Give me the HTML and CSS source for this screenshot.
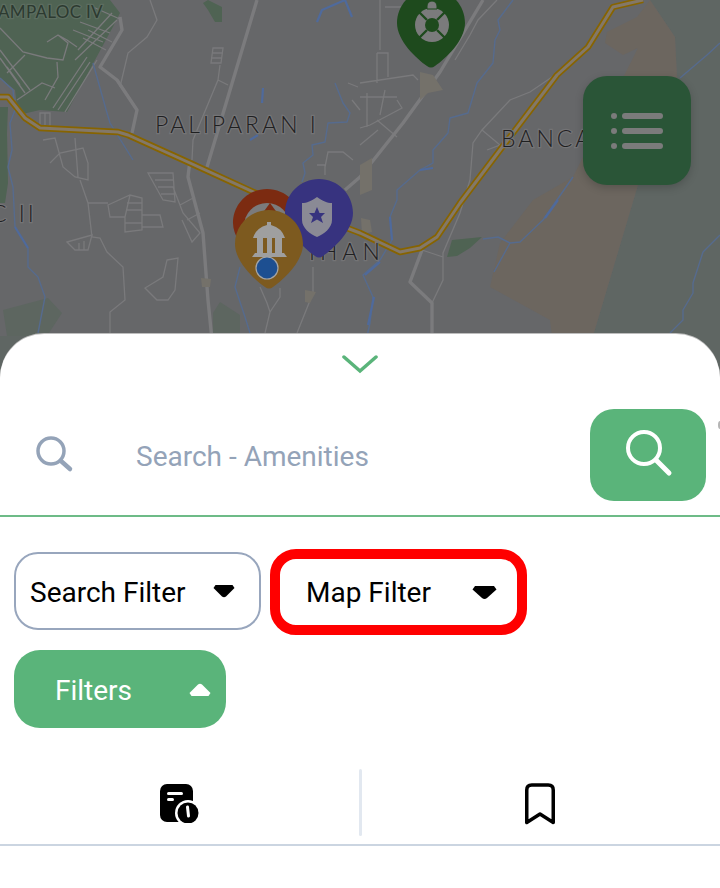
FILE: index.html
```html
<!DOCTYPE html>
<html lang="en">
<head>
<meta charset="utf-8">
<title>Map Filter</title>
<link rel="stylesheet" href="styles.css">
</head>
<body>
<div class="page">
  <div class="map">
    <svg class="map-art" width="720" height="400" viewBox="0 0 720 400">
      <defs>
        <path id="pin" d="M34 0C52.8 0 68 15.2 68 34C68 52 48 70 38 77Q34 80 30 77C20 70 0 52 0 34C0 15.2 15.2 0 34 0Z"/>
      </defs>
      <rect width="720" height="400" fill="#666769"/>
      <g class="soft">
        <path d="M650 0H720V400H0V336H593L638 185L677 77L675 37Z" fill="#5f6663"/>
        <path d="M650 0L675 37L677 77L638 185L593 336H552L550 320L490 287L500 243L533 200L573 177L583 157L638 48L623 55L605 43L607 32L637 17Z" fill="#6c665f"/>
        <path d="M0 0H110L120 13L115 23L95 60L67 112L40 110L18 115L15 90L0 78Z" fill="#4f6353"/>
        <path d="M0 107H8L7 133L8 183L5 203H0Z" fill="#4f6353"/>
        <path d="M203 3L208 0L222 7V22H215L208 10Z" fill="#4f6353"/>
        <path d="M447 257L452 240L482 237L470 248L457 256Z" fill="#4f6353"/>
        <path d="M3 310L48 298L62 313L47 336H7Z" fill="#5d6660"/>
        <path d="M213 313L220 302L240 315V336H213Z" fill="#5d6660"/>
        <g fill="none" stroke="#7a7a7c" stroke-width="1.300">
          <path d="M0 28L23 52L47 58L63 60L68 43L58 35L47 42M58 35L67 40L77 47M25 55L7 73M57 62L58 77L45 100M55 88L42 83L17 100M0 50L30 90M0 58L25 93M7 67L20 85"/>
          <path d="M53 108L87 57M58 110L90 62M65 112L97 60M75 60L117 20M78 50L112 13M93 7L122 20M73 30L103 42M80 22L110 33M83 38L106 50M88 30L112 42"/>
          <path d="M150 0L157 20L147 37L128 53L120 87"/>
          <path d="M213 48H223L221 63H211ZM212 53H223M211 58H222M220 65L218 80L193 140L192 160M218 80L228 85"/>
          <path d="M43 140L55 138L63 167L75 177L88 180V163L83 148L60 153L50 163M75 138L78 177M80 180L88 203L92 237L100 238L107 252L123 267L125 300L110 312V340M88 203H108"/>
          <path d="M108 205L130 195L142 198V230L125 232V217H110ZM130 195L125 217M127 203H142M126 210H142M125 223H142M142 215H160L163 227H142"/>
          <path d="M148 173H173L175 202L163 200ZM155 180H173M158 187H174M161 194H175M173 187L183 213L200 233L192 242L182 220M180 205L195 197M187 220L200 213"/>
          <path d="M67 242L92 235L88 250H75ZM79 243V250M84 241V250"/>
          <path d="M167 260L178 258L175 290L168 300H157L145 288L163 277Z"/>
          <path d="M40 113H50V126H40ZM45 113V126"/>
          <path d="M260 287L267 303L270 312L265 333M280 288V297L270 312M313 267V293L297 333"/>
          <path d="M325 167L328 152H343L353 160M317 165H325V175M348 83L358 87"/>
          <path d="M380 0V50M385 7H403M377 53H388V77M360 83L413 75L418 80M377 83V53M360 97H397M367 93V127M397 100L402 108L370 125L360 128M377 120L397 137M385 90L380 115M360 145L378 130M352 100L360 110"/>
          <path d="M555 75L530 92L510 100L482 130L473 143L470 180L460 213L443 253V280L432 303M482 130L500 145L487 150M422 250L443 257"/>
          <path d="M497 0L478 20L470 35L455 60"/>
        </g>
        <g fill="none" stroke="#7b7b7d" stroke-width="3.400" stroke-linejoin="round">
          <path d="M257 0L207 167M190 160L188 177L203 233L208 300L212 340"/>
          <path d="M483 0L440 72L403 123L360 177L345 190"/>
          <path d="M120 17L122 30L100 67L117 80L137 110L132 133"/>
          <path d="M422 250L410 282L432 303V340"/>
        </g>
        <g fill="none" stroke="#566b8e" stroke-width="1.400" stroke-linejoin="round">
          <path d="M0 78L13 90L15 110L10 123L12 150L8 167L13 187L15 227L28 248V267L38 277L45 297L38 333"/>
          <path d="M93 63L107 113L110 123L133 160"/>
          <path d="M335 83L343 103L350 113L347 122L328 123L325 142L312 145L313 155L303 163L305 173L302 182"/>
          <path d="M513 0L498 20L500 30L495 40L493 63L477 83L468 113L450 118L448 133L433 150V163L420 170L397 190V200L390 217L392 240L380 260L363 275L373 297L370 323L367 336"/>
          <path d="M240 267L235 287L245 317L250 333"/>
          <path d="M573 177L543 220L520 242L510 243L498 237L483 239M510 243L494 272"/>
          <path d="M670 333L683 320V310L693 293V283L703 252L720 235M680 78L707 55L720 43"/>
        </g>
        <g fill="none" stroke="#4f6a9c" stroke-width="2.200" stroke-linejoin="round">
          <path d="M15 227L28 248"/>
          <path d="M317 22L322 10L345 0M345 0L352 17"/>
          <path d="M263 88L262 103M250 140L258 135"/>
          <path d="M420 170L433 168M390 217L392 240M380 262L365 275M374 297L368 325"/>
          <path d="M558 200L545 218"/>
        </g>
        <g fill="#74716a">
          <path d="M420 72L433 75L443 90L428 93L420 100Z"/>
          <path d="M360 165L372 158L372 190L360 195Z"/>
          <path d="M361 218L370 220L372 232L362 234Z"/>
          <path d="M305 290L316 292L310 303L305 302Z"/>
          <path d="M201 278L211 279L210 287L202 287Z"/>
        </g>
      </g>
      <path d="M0 97H8L25 118L40 128L118 132L128 135L190 163L260 195L360 233L400 252L420 248L437 237L460 203L500 150L557 75L588 47L613 7L643 0" fill="none" stroke="#876400" stroke-width="6.400" stroke-linejoin="round"/>
      <path d="M0 97H8L25 118L40 128L118 132L128 135L190 163L260 195L360 233L400 252L420 248L437 237L460 203L500 150L557 75L588 47L613 7L643 0" fill="none" stroke="#837868" stroke-width="3" stroke-linejoin="round"/>
      <g class="map-label">
        <text x="-2" y="18" class="label-small">AMPALOC IV</text>
        <text x="155" y="133">PALIPARAN I</text>
        <text x="-9" y="222">C II</text>
        <text x="309" y="260" class="label-wide">IHAN</text>
        <text x="501" y="147">BANCA</text>
      </g>
      <use href="#pin" x="397" y="-11" fill="#1e4a1d"/>
      <g transform="translate(432 25)">
        <circle r="17" fill="#7b7b7c"/>
        <circle r="7" fill="#1e4a1d"/>
        <path d="M-13 -13L-5 -5M13 -13L5 -5M-13 13L-5 5M13 13L5 5" stroke="#1e4a1d" stroke-width="2.400"/>
        <path d="M-5 -19V-16H5V-19A5 5 0 0 0 -5 -19Z" fill="#7b7b7c" stroke="#1e4a1d"/>
      </g>
      <use href="#pin" x="233" y="189" fill="#7c2b11"/>
      <circle cx="267" cy="226" r="23" fill="#7b7b7c"/>
      <path d="M262 214L270 203L278 214Z" fill="#7c2b11"/>
      <use href="#pin" x="285" y="179" fill="#37337f"/>
      <path d="M317 197C311 201 307 203 302 203V220C302 228 310 234 317 237C324 234 332 228 332 220V203C327 203 323 201 317 197Z" fill="#8a8a95"/>
      <path d="M317 207L319.500 213L325 213L321 217L323 223L317 219.500L311 223L313 217L309 213L314.500 213Z" fill="#37337f"/>
      <use href="#pin" x="235" y="210" fill="#7d5a1f"/>
      <g fill="#9f9f9f">
        <path d="M253 238Q256 228 267 225V222H271V225Q282 228 285 238Z"/>
        <rect x="257" y="238" width="6" height="16"/>
        <rect x="267" y="238" width="5" height="16"/>
        <rect x="275" y="238" width="7" height="16"/>
        <path d="M252 257L255 253H284L287 257Z"/>
      </g>
      <circle cx="267" cy="268" r="11" fill="#1d4f91" stroke="#a5a5a5" stroke-width="1.200"/>
    </svg>
    <button class="menu-btn" type="button" aria-label="List">
      <svg width="52" height="36" viewBox="0 0 52 36" fill="#7b7b7b">
        <circle cx="3" cy="3" r="3"/><circle cx="3" cy="18" r="3"/><circle cx="3" cy="33" r="3"/>
        <rect x="11" y="0" width="41" height="6" rx="3"/><rect x="11" y="15" width="41" height="6" rx="3"/><rect x="11" y="30" width="41" height="6" rx="3"/>
      </svg>
    </button>
  </div>

  <section class="sheet">
    <div class="handle">
      <svg width="36" height="19" viewBox="0 0 36 19" fill="none" stroke="#5ab47a" stroke-width="3.500" stroke-linecap="round" stroke-linejoin="miter"><path d="M2 2L18 16L34 2"/></svg>
    </div>
    <div class="search-row">
      <svg class="search-icon" width="38" height="38" viewBox="0 0 38 38" fill="none" stroke="#94a3b8" stroke-width="3.500" stroke-linecap="round"><circle cx="15" cy="15" r="13"/><path d="M25 25L34 33" stroke-width="4.500"/></svg>
      <span class="search-text">Search - Amenities</span>
      <button class="search-btn" type="button" aria-label="Search">
        <svg width="48" height="48" viewBox="0 0 48 48" fill="none" stroke="#fff" stroke-width="4" stroke-linecap="round"><circle cx="19" cy="19" r="16"/><path d="M31 31L44 44" stroke-width="5"/></svg>
      </button>
    </div>
    <div class="filters">
      <button class="filter filter-search" type="button">
        <span>Search Filter</span>
        <svg width="22" height="14" viewBox="0 0 22 14"><path d="M2.500 1H19.500L21.500 4L13 12.500Q11 14 9 12.500L.5 4Z"/></svg>
      </button>
      <button class="filter filter-map" type="button">
        <span>Map Filter</span>
        <svg width="25" height="15" viewBox="0 0 25 15"><path d="M3 1H22L24.500 4.500L15 13Q12.500 15 10 13L.5 4.500Z"/></svg>
      </button>
      <button class="filter filter-active" type="button">
        <span>Filters</span>
        <svg width="22" height="14" viewBox="0 0 22 14"><path d="M2.500 13H19.500L21.500 10L13 1.500Q11 0 9 1.500L.5 10Z"/></svg>
      </button>
    </div>
    <div class="tabs">
      <div class="tab">
        <svg width="40" height="40" viewBox="0 0 40 40">
          <rect x="1" y="1" width="33" height="38" rx="7" fill="#000"/>
          <rect x="8" y="9" width="16" height="3" rx="1.500" fill="#fff"/>
          <rect x="8" y="15" width="7" height="3" rx="1.500" fill="#fff"/>
          <circle cx="29" cy="30" r="13" fill="#fff"/>
          <circle cx="29" cy="30" r="10.500" fill="#000"/>
          <path d="M28.500 24L29.500 33" stroke="#fff" stroke-width="3" stroke-linecap="round"/>
        </svg>
      </div>
      <div class="tab-divider"></div>
      <div class="tab">
        <svg class="bookmark" width="30" height="42" viewBox="0 0 30 42" fill="none" stroke="#000" stroke-width="3.500" stroke-linejoin="round" stroke-linecap="round"><path d="M1.750 39.500V7Q1.750 2 6.750 2H23.250Q28.250 2 28.250 7V39.500L15 31Z"/></svg>
      </div>
    </div>
  </section>
  <div class="edge-mark"></div>
</div>
</body>
</html>
```

FILE: styles.css
```css
* { box-sizing: border-box; }

html, body {
  margin: 0;
  padding: 0;
  background: #fff;
}

.page {
  position: relative;
  width: 720px;
  height: 888px;
  overflow: hidden;
  font-family: Roboto, "Liberation Sans", sans-serif;
}

.map {
  position: absolute;
  left: 0;
  top: 0;
  width: 720px;
  height: 400px;
}

.map-art { display: block; }

.soft { filter: blur(.5px); }

.map-label text {
  font-family: Lato, "Liberation Sans", sans-serif;
  font-weight: 300;
  font-size: 23px;
  fill: #1f2021;
  letter-spacing: 3px;
  stroke: #747476;
  stroke-width: 2.500px;
  paint-order: stroke;
}

.map-label .label-small {
  font-size: 17px;
  font-weight: 400;
  letter-spacing: .3px;
  fill: #2c3a30;
  stroke: #5c6d60;
}

.map-label .label-wide { letter-spacing: 5px; }

.menu-btn {
  position: absolute;
  left: 583px;
  top: 76px;
  width: 108px;
  height: 109px;
  border: 0;
  padding: 0;
  border-radius: 24px;
  background: #2a5537;
  box-shadow: 0 3px 8px rgba(0, 0, 0, .18);
  display: flex;
  align-items: center;
  justify-content: center;
}

.sheet {
  position: relative;
  margin-top: 334px;
  height: 554px;
  background: #fff;
  box-shadow: 0 -1px 0 #bdbdbd;
  border-radius: 44px 44px 0 0;
  display: flex;
  flex-direction: column;
}

.handle {
  height: 75px;
  padding-top: 21px;
  display: flex;
  justify-content: center;
  align-items: flex-start;
}

.search-row {
  height: 108px;
  padding: 0 14px 14px 36px;
  border-bottom: 2px solid #6dbb87;
  display: flex;
  align-items: center;
}

.search-icon { flex: none; }

.search-text {
  margin-left: 62px;
  padding-top: 2px;
  flex: 1;
  font-size: 28px;
  color: #94a3b8;
}

.search-btn {
  flex: none;
  width: 116px;
  height: 92px;
  border: 0;
  padding: 0 0 4px 2px;
  border-radius: 24px;
  background: #5ab47a;
  display: flex;
  align-items: center;
  justify-content: center;
}

.filters {
  margin-top: 32px;
  padding-left: 14px;
  display: flex;
  flex-wrap: wrap;
  align-items: flex-start;
  column-gap: 9px;
  row-gap: 15px;
}

.filter {
  display: flex;
  align-items: center;
  justify-content: space-between;
  margin: 0;
  font-family: inherit;
  font-size: 28px;
  color: #000;
  background: #fff;
}

.filter svg { flex: none; fill: currentColor; }

.filter-search {
  width: 247px;
  height: 78px;
  margin-top: 3px;
  padding: 2px 24px 0 14px;
  border: 2px solid #98a6bd;
  border-radius: 24px;
}

.filter-search svg { margin-top: -2px; }

.filter-map {
  width: 257px;
  height: 86px;
  padding: 0 20px 0 26px;
  border: 10px solid #ff0000;
  border-radius: 26px;
}

.filter-active {
  width: 212px;
  height: 78px;
  padding: 2px 15px 0 41px;
  border: 0;
  border-radius: 26px;
  background: #5ab47a;
  color: #fff;
  margin-right: 400px;
}

.tabs {
  margin-top: 41px;
  height: 77px;
  padding-bottom: 8px;
  border-bottom: 2px solid #cbd5e1;
  display: flex;
  align-items: stretch;
}

.tab {
  flex: 1;
  display: flex;
  align-items: center;
  justify-content: center;
}

.bookmark { margin: 2px 0 0 -2px; }

.tab-divider {
  flex: none;
  width: 3px;
  background: #e2e8f0;
  border-radius: 2px;
}

.edge-mark {
  position: absolute;
  left: 718px;
  top: 421px;
  width: 4px;
  height: 8px;
  border-radius: 50%;
  background: #b5b5b5;
}
```
